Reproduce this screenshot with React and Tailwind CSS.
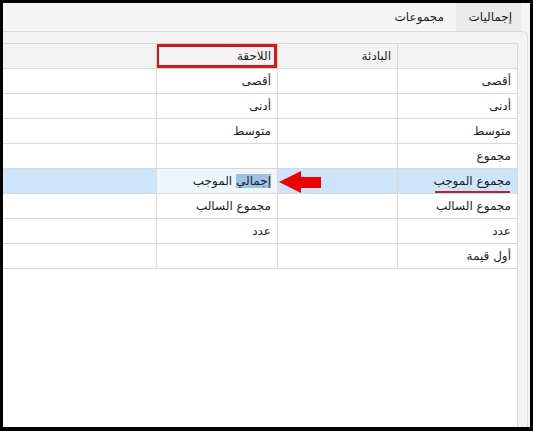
// Summary settings grid: tab strip on top, RTL grid with prefix / suffix columns.
const ROWS = [
  { name: 'أقصى', suffix: 'أقصى' },
  { name: 'أدنى', suffix: 'أدنى' },
  { name: 'متوسط', suffix: 'متوسط' },
  { name: 'مجموع', suffix: '' },
  { name: 'مجموع الموجب', suffix: 'إجمالي الموجب', selected: true },
  { name: 'مجموع السالب', suffix: 'مجموع السالب' },
  { name: 'عدد', suffix: 'عدد' },
  { name: 'أول قيمة', suffix: '' },
];

function Cell({ children, className = '', last = false }) {
  return (
    <div
      dir="rtl"
      className={`relative flex items-center overflow-hidden whitespace-nowrap pr-[6px] text-right ${last ? '' : 'border-r border-[#d9d9d9]'} ${className}`}
    >
      {children}
    </div>
  );
}

function Arrow() {
  return (
    <svg className="absolute left-[0px] top-[1px]" width="46" height="24" viewBox="0 0 46 24">
      <path d="M1 12 L23 1 L23 7 L43 7 L43 18 L23 18 L23 23 Z" fill="#ee0000" />
    </svg>
  );
}

function GridRow({ row }) {
  const bg = row.selected ? 'bg-[#cce5fa]' : 'bg-white';
  return (
    <div className={`flex h-[25px] border-b border-[#d9d9d9] ${bg}`}>
      <Cell className="flex-1" />
      <Cell className={`w-[121px] ${row.selected ? 'bg-[#eef6fd]' : ''}`}>
        {row.selected ? (
          <span>
            <span className="bg-[#9cc3e6]">إجمالي</span> الموجب
          </span>
        ) : (
          row.suffix
        )}
      </Cell>
      <Cell className="w-[120px]">{row.selected ? <Arrow /> : null}</Cell>
      <Cell className="w-[119px]" last>
        {row.name}
        {row.selected ? <div className="absolute bottom-0 left-[37px] right-[7px] h-[2px] bg-[#b32330]" /> : null}
      </Cell>
    </div>
  );
}

export default function App() {
  return (
    <div
      className="h-[431px] w-[533px] border-x-[3px] border-b-4 border-t-[3px] border-black bg-[#f5f5f5] text-[12px] text-[#1e1e1e]"
      style={{ fontFamily: '"DejaVu Sans", "Liberation Sans", sans-serif' }}
    >
      <div className="flex h-full flex-col">
        {/* tabs */}
        <div dir="rtl" className="flex h-[28px] items-stretch pr-[9px]">
          <div className="flex w-[65px] items-center bg-[#ebebeb] pr-[9px]">إجماليات</div>
          <div className="flex items-center px-[12px]">مجموعات</div>
        </div>

        {/* panel */}
        <div className="mr-[2px] flex flex-1 flex-col rounded-tr-[6px] border-r border-t border-[#dcdcdc] bg-[#f4f4f4] pr-[9px] pt-[11px]">
          <div className="flex flex-1 flex-col border-r border-t border-[#d9d9d9] bg-white">
            <div className="flex h-[25px] border-b border-[#d9d9d9] bg-[#f3f3f3]">
              <Cell className="flex-1" />
              <Cell className="w-[121px]">
                اللاحقة
                <div className="absolute inset-0 -left-[1px] border-[3px] border-[#d6161c]" />
              </Cell>
              <Cell className="w-[120px]">البادئة</Cell>
              <Cell className="w-[119px]" last />
            </div>
            {ROWS.map((row) => (
              <GridRow key={row.name} row={row} />
            ))}
          </div>
        </div>
      </div>
    </div>
  );
}
